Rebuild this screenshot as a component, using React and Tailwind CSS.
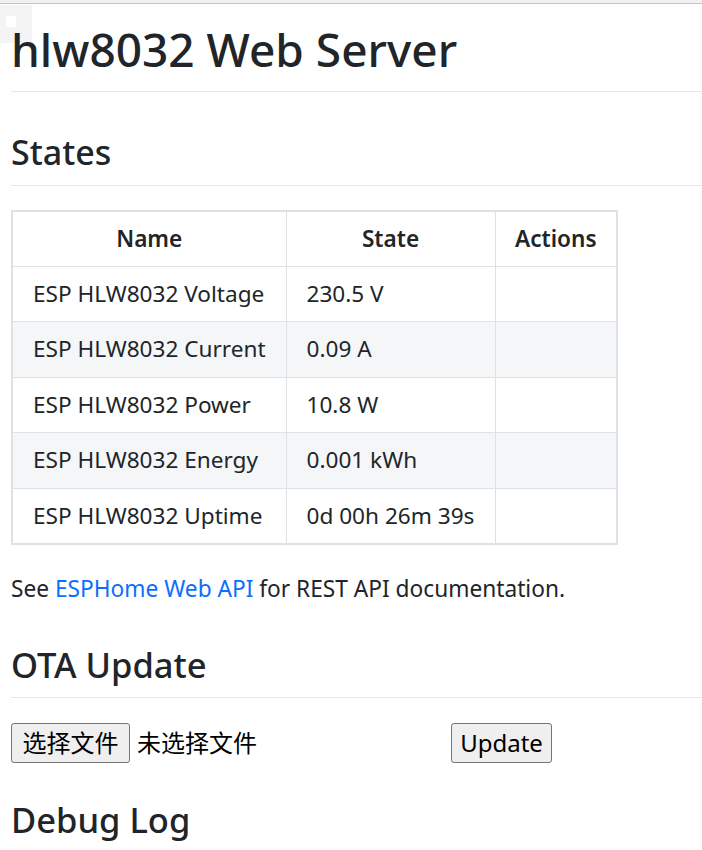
import React from 'react';

const rows = [
  { name: 'ESP HLW8032 Voltage', state: '230.5 V' },
  { name: 'ESP HLW8032 Current', state: '0.09 A' },
  { name: 'ESP HLW8032 Power', state: '10.8 W' },
  { name: 'ESP HLW8032 Energy', state: '0.001 kWh' },
  { name: 'ESP HLW8032 Uptime', state: '0d 00h 26m 39s' },
];

const font = { fontFamily: '"Noto Sans", "Noto Sans CJK SC", sans-serif' };

const App = () => {
  return (
    <div className="relative min-h-screen bg-white text-[#212529]" style={font}>
      {/* browser chrome strip */}
      <div className="h-[4px] bg-[#f1f1f1] border-b border-[#c4c4c4]" />

      {/* little floating widget in the corner, sits behind the heading */}
      <div className="absolute left-0 top-[5px] w-[32px] h-[38px] bg-[#f4f4f4]">
        <div className="absolute left-[6px] top-[11px] w-[10px] h-[11px] bg-white" />
      </div>

      <div className="relative pl-[11px]">
        <h1 className="mt-[16px] text-[46px] leading-[58px] font-medium">hlw8032 Web Server</h1>
        <hr className="mt-[13px] border-t border-[#e6e6e6]" />

        <h2 className="mt-[39px] text-[34px] leading-[42px] font-medium">States</h2>
        <hr className="mt-[12px] border-t border-[#e6e6e6]" />

        <table className="mt-[24px] border-collapse border-2 border-[#dee2e6] text-[22.6px] table-fixed whitespace-nowrap">
          <thead>
            <tr className="h-[55px]">
              <th className="w-[274px] border border-[#dee2e6] font-semibold text-center">Name</th>
              <th className="w-[209px] border border-[#dee2e6] font-semibold text-center">State</th>
              <th className="w-[122px] border border-[#dee2e6] font-semibold text-center">Actions</th>
            </tr>
          </thead>
          <tbody>
            {rows.map((r, i) => (
              <tr key={r.name} className={i % 2 === 1 ? 'h-[55.5px] bg-[#f5f6f8]' : 'h-[55.5px] bg-white'}>
                <td className="border border-[#dee2e6] pl-5 pr-1 font-normal">{r.name}</td>
                <td className="border border-[#dee2e6] pl-5 pr-1">{r.state}</td>
                <td className="border border-[#dee2e6] px-5"></td>
              </tr>
            ))}
          </tbody>
        </table>

        <p className="mt-[26px] text-[22.7px] leading-[36px]">
          See{' '}
          <a href="#" className="text-[#0d6efd]">
            ESPHome Web API
          </a>{' '}
          for REST API documentation.
        </p>

        <h2 className="mt-[37px] text-[34.5px] leading-[42px] font-medium">OTA Update</h2>
        <hr className="mt-[11px] border-t border-[#e6e6e6]" />

        <form className="mt-[25px] flex items-center" onSubmit={(e) => e.preventDefault()}>
          <div className="w-[436px] flex items-center text-[24px]">
            <span className="h-[40px] w-[119px] flex items-center justify-center rounded-[3px] border border-[#767676] bg-[#efefef] text-black">
              选择文件
            </span>
            <span className="ml-[7px] text-black">未选择文件</span>
          </div>
          <button
            type="submit"
            className="ml-[4px] h-[40px] w-[101px] rounded-[3px] border border-[#767676] bg-[#efefef] text-[24px] text-black"
          >
            Update
          </button>
        </form>

        <h2 className="mt-[36px] text-[34.5px] leading-[42px] font-medium">Debug Log</h2>
      </div>
    </div>
  );
};

export default App;
